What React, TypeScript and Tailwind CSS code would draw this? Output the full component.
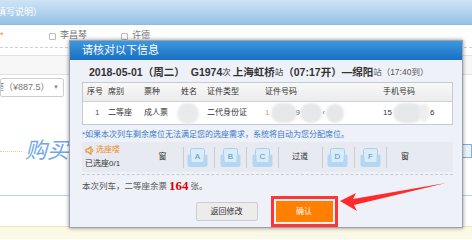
import React from 'react';

const cjk = 'font-["Liberation_Sans","Noto_Sans_CJK_SC",sans-serif]';

function Seat({ letter }: { letter: string }) {
    return (
        <svg width="21" height="21" viewBox="0 0 21 21" className="shrink-0">
            <rect x="3.5" y="1.5" width="14" height="14" rx="2" fill="#d9ecf9" stroke="#a8d0ee" />
            <rect x="0.5" y="7.5" width="4" height="12" rx="1.5" fill="#b3d7f2" />
            <rect x="16.5" y="7.5" width="4" height="12" rx="1.5" fill="#b3d7f2" />
            <rect x="2" y="15" width="17" height="5" rx="1" fill="#b3d7f2" />
            <text x="10.5" y="11.5" fontSize="8" textAnchor="middle" fill="#5b8db8" fontFamily="Liberation Sans, sans-serif">
                {letter}
            </text>
        </svg>
    );
}

function Sep() {
    return <div className="w-px h-[21px] bg-[#c9ccd2] shrink-0" />;
}

function Box() {
    return <span className="inline-block w-[7px] h-[7px] border border-[#bbb] bg-white rounded-[1px]" />;
}

export default function App() {
    return (
        <div className={`relative w-[472px] h-[240px] overflow-hidden bg-white ${cjk}`}>
            {/* page behind the dialog */}
            <div className="h-[25px] bg-gradient-to-b from-[#cfe4f5] to-[#95c2e6] border-b border-[#8fbde2] text-[9px] text-white leading-[25px] -ml-[3px]">
                填写说明）
            </div>
            <div className="h-[23px] flex items-center text-[9px] text-[#777] border-b border-dashed border-[#cfcfcf]">
                <span className="text-[#f08a1c] w-[49px]">*</span>
                <Box />
                <span className="ml-[4px] w-[61px]">李昌琴</span>
                <Box />
                <span className="ml-[4px]">许德</span>
            </div>
            <div className="h-[7px]" />
            <div className="h-[20px] bg-[#f7f7f7] border-y border-[#e2e2e2]" />
            <div className="mt-[3px] h-[19px] w-[64px] border border-[#cfcfcf] rounded-[2px] flex items-center text-[9px] text-[#777] overflow-hidden">
                <span className="-ml-[6px]">座</span>
                <span>（¥887.5）</span>
                <span className="ml-auto mr-[4px] text-[6px] text-[#888]">▼</span>
            </div>
            <div className="mt-[42px] h-[24px] flex items-center">
                <div className="w-[22px] border-t border-dotted border-[#f0c9a0]" />
                <span className="ml-[3px] text-[22px] italic text-[#6ea8ea] leading-none">购买</span>
                <div className="ml-auto w-[10px] h-[14px] border border-[#7fb0e0] bg-[#eaf3fc]" />
            </div>
            <div className="h-[33px] border-b border-[#b9d6f0]" />
            <div className="h-[30px]" />
            <div className="h-[13px] bg-[#fcf8e6] border-t border-[#f1e3ad]" />

            {/* dialog */}
            <div className="absolute left-[69px] top-[40px] w-[394px] h-[188px] bg-[#eef1f8] border border-[#9aa3ad] shadow-[0_0_4px_rgba(0,0,0,0.45)] flex flex-col">
                <div className="h-[23px] bg-gradient-to-b from-[#3c98de] to-[#166fc2] flex items-center pl-[12px] text-[11px] text-white">
                    请核对以下信息
                </div>
                <div className="flex flex-col pl-[12px] pr-[9px]">
                    <div className="mt-[5px] h-[14px] flex items-end pl-[7px] text-[10.5px] text-[#333] whitespace-nowrap leading-[14px]">
                        <b>2018-05-01</b>
                        <b>（周二）</b>
                        <b className="ml-[6px]">G1974</b>
                        <span className="text-[8.5px]">次</span>
                        <b className="ml-[2px]">上海虹桥</b>
                        <span className="text-[8.5px]">站</span>
                        <b>（07:17开）—绵阳</b>
                        <span className="text-[8.5px] text-[#555]">站（17:40到）</span>
                    </div>
                    <div className="mt-[3px] border border-[#c6c9ce] bg-white text-[8px] text-[#333]">
                        <div className="h-[19px] grid grid-cols-[21px_36px_37px_26px_58px_118px_1fr] items-center pl-[4px] bg-gradient-to-b from-[#f8f8f8] to-[#ececec] border-b border-[#cfd2d6]">
                            <span>序号</span>
                            <span>席别</span>
                            <span>票种</span>
                            <span>姓名</span>
                            <span>证件类型</span>
                            <span>证件号码</span>
                            <span>手机号码</span>
                        </div>
                        <div className="h-[22px] grid grid-cols-[21px_36px_37px_26px_58px_118px_1fr] items-center pl-[4px]">
                            <span className="pl-[8px] text-[#555]">1</span>
                            <span>二等座</span>
                            <span>成人票</span>
                            <span className="-ml-[4px] w-[22px] h-[21px] rounded-full bg-[#e9eaec] blur-[1px]" />
                            <span>二代身份证</span>
                            <span className="flex items-center">
                                <span className="text-[#e59a5a]">1</span>
                                <span className="ml-[2px] w-[26px] h-[20px] rounded-full bg-[#e6e7e9] blur-[1px]" />
                                <span className="-ml-[2px] w-[10px] text-[#444]">9</span>
                                <span className="-ml-[5px] w-[22px] h-[20px] rounded-full bg-[#e6e7e9] blur-[1px]" />
                                <span className="text-[#555] text-[7px]">‹</span>
                                <span className="ml-[1px] w-[18px] h-[19px] rounded-full bg-[#e6e7e9] blur-[1px]" />
                            </span>
                            <span className="flex items-center">
                                <span>15</span>
                                <span className="ml-[1px] w-[30px] h-[20px] rounded-full bg-[#e6e7e9] blur-[1px]" />
                                <span className="-ml-[4px] w-[10px] h-[18px] rounded-full bg-[#eeeeef] blur-[1px]" />
                                <span className="ml-[1px]">6</span>
                            </span>
                        </div>
                    </div>
                    <div className="mt-[4px] h-[12px] leading-[12px] text-[8px] text-[#3b79c8] whitespace-nowrap">
                        *如果本次列车剩余席位无法满足您的选座需求，系统将自动为您分配席位。
                    </div>
                    <div className="mt-[1px] h-[30px] bg-[#e7eaf0] flex items-center text-[8px] text-[#333]">
                        <div className="w-[70px] pl-[3px] flex flex-col">
                            <div className="h-[14px] flex items-center text-[#f08a1c]">
                                <svg width="10" height="9" viewBox="0 0 10 9" className="mr-[1px] shrink-0">
                                    <path d="M1 3h2l3-2.2v7.4L3 6H1z" fill="none" stroke="#f08a1c" strokeWidth="1.2" strokeLinejoin="round" />
                                    <path d="M7.5 3.2q1 1.3 0 2.6" fill="none" stroke="#f08a1c" strokeWidth="1" />
                                </svg>
                                <span>选座喽</span>
                            </div>
                            <div className="h-[14px] flex items-center">已选座0/1</div>
                        </div>
                        <div className="w-[21px] text-center">窗</div>
                        <div className="w-[10px]" />
                        <Sep />
                        <div className="ml-[3px]"><Seat letter="A" /></div>
                        <div className="ml-[6px]"><Sep /></div>
                        <div className="ml-[5px]"><Seat letter="B" /></div>
                        <div className="ml-[5px]"><Sep /></div>
                        <div className="ml-[5px]"><Seat letter="C" /></div>
                        <div className="ml-[5px]"><Sep /></div>
                        <div className="ml-[13px] w-[16px] whitespace-nowrap">过道</div>
                        <div className="ml-[14px]"><Sep /></div>
                        <div className="ml-[4px]"><Seat letter="D" /></div>
                        <div className="ml-[6px]"><Sep /></div>
                        <div className="ml-[5px]"><Seat letter="F" /></div>
                        <div className="ml-[5px]"><Sep /></div>
                        <div className="ml-[14px]">窗</div>
                    </div>
                    <div className="mt-[2px] border-t border-dashed border-[#c8ccd3]" />
                    <div className="mt-[4px] h-[14px] flex items-center text-[8.5px] text-[#555] whitespace-nowrap">
                        本次列车，二等座余票
                        <b className="mx-[2px] text-[13px] text-[#e00000] font-['Liberation_Serif',serif]">164</b>
                        张。
                    </div>
                    <div className="mt-[3px] flex justify-center items-center gap-[13px] pr-[2px]">
                        <div className="w-[62px] h-[19px] bg-[#ececec] border border-[#cdcdcd] rounded-[2px] flex items-center justify-center text-[8px] text-[#333]">
                            返回修改
                        </div>
                        <div className="border-[3px] border-[#ff3434] p-[2px]">
                            <div className="w-[57px] h-[21px] bg-[#ff8000] flex items-center justify-center text-[8px] text-white">
                                确认
                            </div>
                        </div>
                    </div>
                </div>
            </div>

            {/* annotation arrow */}
            <svg className="absolute left-0 top-0 pointer-events-none" width="472" height="240" viewBox="0 0 472 240">
                <polygon points="340,201 356,193 353,199 446,183 354,205 357,211" fill="#ff2a2a" />
            </svg>
        </div>
    );
}
